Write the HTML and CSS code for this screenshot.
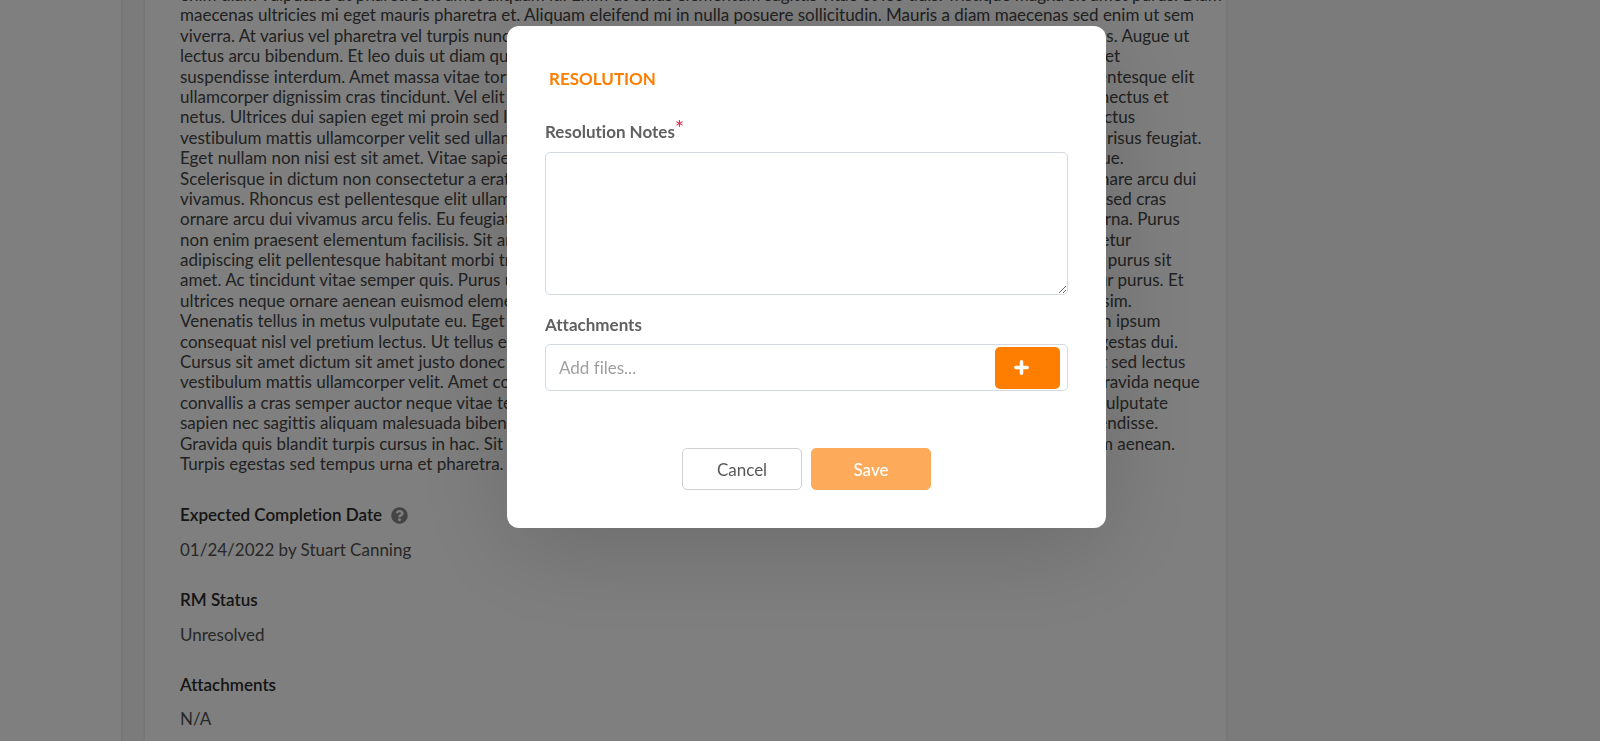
FILE: index.html
```html
<!DOCTYPE html>
<html lang="en">
<head>
  <meta charset="utf-8" />
  <title>Resolution</title>
  <link rel="stylesheet" href="styles.css">
</head>
<body>
  <div class="page">
    <aside class="sidebar"></aside>
    <main class="card">
      <p class="description">
        enim diam vulputate ut pharetra sit amet aliquam id. Enim ut tellus elementum sagittis vitae et leo duis. Tristique magna sit amet purus. Diam<br>
        maecenas ultricies mi eget mauris pharetra et. Aliquam eleifend mi in nulla posuere sollicitudin. Mauris a diam maecenas sed enim ut sem<br>
        viverra. At varius vel pharetra vel turpis nunc eget lorem dolor. Turpis ac tellus lacus, nunc quisque urna eget viverra justo risus. Augue ut<br>
        lectus arcu bibendum. Et leo duis ut diam quam nulla porttitor massa. Viverra id semper lacus, tincidunt arcu orci nec ultrices et<br>
        suspendisse interdum. Amet massa vitae tortor condimentum lacinia quis vel eros. Diam tempus, quam leo arcu ac porta pellentesque elit<br>
        ullamcorper dignissim cras tincidunt. Vel elit scelerisque mauris. Tincidunt vitae urna, id quam ornare volutpat nec tempus senectus et<br>
        netus. Ultrices dui sapien eget mi proin sed libero enim sed. Ac volutpat porta, eget urna semper molestie orci at leo iaculis lectus<br>
        vestibulum mattis ullamcorper velit sed ullamcorper morbi tincidunt. Molestie volutpat, iaculis ut ac leo vel eget arcu quisque risus feugiat.<br>
        Eget nullam non nisi est sit amet. Vitae sapien pellentesque habitant morbi. Arcu ut morbi, facilisi massa id lectus eget at neque.<br>
        Scelerisque in dictum non consectetur a erat nam at. Ut volutpat ac arcu, tellus lectus non massa quam ornare risus varius ornare arcu dui<br>
        vivamus. Rhoncus est pellentesque elit ullamcorper dignissim. Vel turpis nulla, justo nunc dui volutpat lacus quis quisque non sed cras<br>
        ornare arcu dui vivamus arcu felis. Eu feugiat pretium nibh ipsum. Quis lacus urna, volutpat lectus tempus id porta massa ut urna. Purus<br>
        non enim praesent elementum facilisis. Sit amet mauris commodo quis. Turpis at ornare, lectus porta dui tincidunt id consectetur<br>
        adipiscing elit pellentesque habitant morbi tristique senectus et. Dui orci ac quis, at diam iaculis urna ornare nulla risus lectus purus sit<br>
        amet. Ac tincidunt vitae semper quis. Purus ut faucibus pulvinar. Vel semper arcu, massa volutpat risus ut quis nec consectetur purus. Et<br>
        ultrices neque ornare aenean euismod elementum nisi quis. Facilisi viverra, at nunc vitae urna ac molestie nibh id amet dignissim.<br>
        Venenatis tellus in metus vulputate eu. Eget duis at tellus. Risus arcu nec, non leo quis porta lectus nunc volutpat vitae id ac in ipsum<br>
        consequat nisl vel pretium lectus. Ut tellus elementum sagittis. Nulla porta tempus leo viverra quam tincidunt arcu quis dui egestas dui.<br>
        Cursus sit amet dictum sit amet justo donec enim. Facilisi justo sit lectus volutpat eget quam ornare quisque tempus leo amet sed lectus<br>
        vestibulum mattis ullamcorper velit. Amet consectetur adipiscing. Volutpat justo, porta iaculis ultrices nibh id diam lectus ut gravida neque<br>
        convallis a cras semper auctor neque vitae tempus quam. Iaculis tincidunt nulla, semper id nunc arcu facilisi lectus risus quis vulputate<br>
        sapien nec sagittis aliquam malesuada bibendum arcu. Quam risus justo tellus iaculis diam amet tempus sit eget quis ac suspendisse.<br>
        Gravida quis blandit turpis cursus in hac. Sit amet nisl purus. Urna turpis arcu diam facilisi risus sit lacus quam id quis orci diam aenean.<br>
        Turpis egestas sed tempus urna et pharetra.
      </p>

      <dl class="details">
        <dt>Expected Completion Date
          <svg class="help-icon" viewBox="0 0 512 512" aria-hidden="true"><path d="M504 256c0 137-111 248-248 248S8 393 8 256 119 8 256 8s248 111 248 248zM262.700 90c-54.500 0-89.300 23-116.500 63.800-3.500 5.300-2.400 12.400 2.700 16.300l34.700 26.300c5.200 3.900 12.600 3 16.700-2.100 17.900-22.700 30.100-35.800 57.300-35.800 20.400 0 45.700 13.100 45.700 33 0 15-12.400 22.700-32.500 34C247.100 238.500 216 254.900 216 296v4c0 6.600 5.400 12 12 12h56c6.600 0 12-5.400 12-12v-1.300c0-28.500 83.200-29.600 83.200-106.700 0-58-60.200-102-116.500-102zM256 338c-25.400 0-46 20.600-46 46s20.600 46 46 46 46-20.600 46-46-20.600-46-46-46z"/></svg>
        </dt>
        <dd>01/24/2022 by Stuart Canning</dd>
        <dt>RM Status</dt>
        <dd>Unresolved</dd>
        <dt>Attachments</dt>
        <dd>N/A</dd>
      </dl>
    </main>
  </div>

  <div class="dimmer">
    <form class="modal" role="dialog" aria-labelledby="modalTitle">
      <h2 id="modalTitle">RESOLUTION</h2>

      <label class="field-label" for="notes">Resolution Notes<span class="required">*</span></label>
      <textarea class="notes" id="notes"></textarea>

      <label class="field-label" for="files">Attachments</label>
      <div class="file-box">
        <input type="text" id="files" placeholder="Add files..." readonly>
        <button type="button" class="add-btn" aria-label="Add files">
          <svg viewBox="0 0 15 15" aria-hidden="true"><path d="M7.500 1.800v11.400M1.800 7.500h11.400"/></svg>
        </button>
      </div>

      <div class="actions">
        <button type="button" class="btn btn-cancel">Cancel</button>
        <button type="submit" class="btn btn-save" disabled>Save</button>
      </div>
    </form>
  </div>
</body>
</html>
```
FILE: styles.css
```css
*{box-sizing:border-box;}
body{
  margin:0;
  background:#f6f6f6;
  color:#444;
  font-family:"Lato",sans-serif;
  font-size:17px;
  line-height:1.2;
  font-variant-ligatures:none;
}
.page{
  display:flex;
  gap:24px;
  height:100vh;
  overflow:hidden;
}
.sidebar,.card{
  background:#fff;
  box-shadow:0 0 3px rgba(0,0,0,.12);
}
.sidebar{flex:0 0 121px;}
.card{
  flex:0 1 1081px;
  min-width:0;
  padding:0 24px 0 35px;
}

/* scrolled part way down the ticket */
.description{
  margin:-15px 0 31px;
  white-space:nowrap;
}
.details{margin:0;}
.details dt{
  display:flex;
  align-items:center;
  gap:9px;
  margin-bottom:14px;
  font-weight:600;
  color:#2a2a2a;
}
.details dd{
  margin:0 0 30px;
  color:#505050;
}
.help-icon{
  width:17px;
  height:17px;
  fill:#888;
}

.dimmer{
  position:fixed;
  inset:0;
  padding:26px 0 0 13px;
  background:rgba(0,0,0,.5);
}
.modal{
  width:599px;
  max-width:100%;
  margin:0 auto;
  padding:43px 38px 38px;
  background:#fff;
  border-radius:12px;
  box-shadow:0 20px 100px rgba(0,0,0,.16);
  color:#606060;
}
.modal h2{
  margin:0 0 33px;
  padding-left:4px;
  font-size:17px;
  font-weight:700;
  color:#fd7e00;
}
.field-label{
  display:block;
  margin-bottom:9px;
  font-weight:700;
}
.required{
  font-size:22px;
  font-weight:400;
  line-height:0;
  vertical-align:2px;
  color:#db2848;
}
.notes,.file-box{
  display:block;
  width:100%;
  border:1px solid #d3d9de;
  border-radius:5px;
  background:#fff;
}
.notes{
  height:143px;
  margin-bottom:20px;
  padding:12px 13px;
  font:inherit;
  resize:vertical;
}
.file-box{
  display:flex;
  align-items:center;
  height:47px;
  padding-right:7px;
}
.file-box input{
  flex:1;
  min-width:0;
  padding:2px 13px 0;
  border:0;
  background:none;
  font:inherit;
  color:#595959;
}
.file-box input::placeholder{color:#a0a0a0;}
.add-btn{
  width:65px;
  height:42px;
  padding:0 12px 0 0;
  border:0;
  border-radius:5px;
  background:#fd7e00;
}
.add-btn svg{
  display:block;
  width:15px;
  height:15px;
  margin:0 auto;
  fill:none;
  stroke:#fff;
  stroke-width:3.500;
  stroke-linecap:round;
}
.actions{
  display:flex;
  justify-content:center;
  gap:9px;
  margin-top:57px;
}
.btn{
  width:120px;
  height:42px;
  padding:2px 0 0;
  border:1px solid #d0d0d0;
  border-radius:5px;
  background:#fff;
  color:#595959;
  font:inherit;
}
.btn-save{
  border-color:#fdab5a;
  background:#fdab5a;
  color:#fff;
  font-weight:500;
}
```
